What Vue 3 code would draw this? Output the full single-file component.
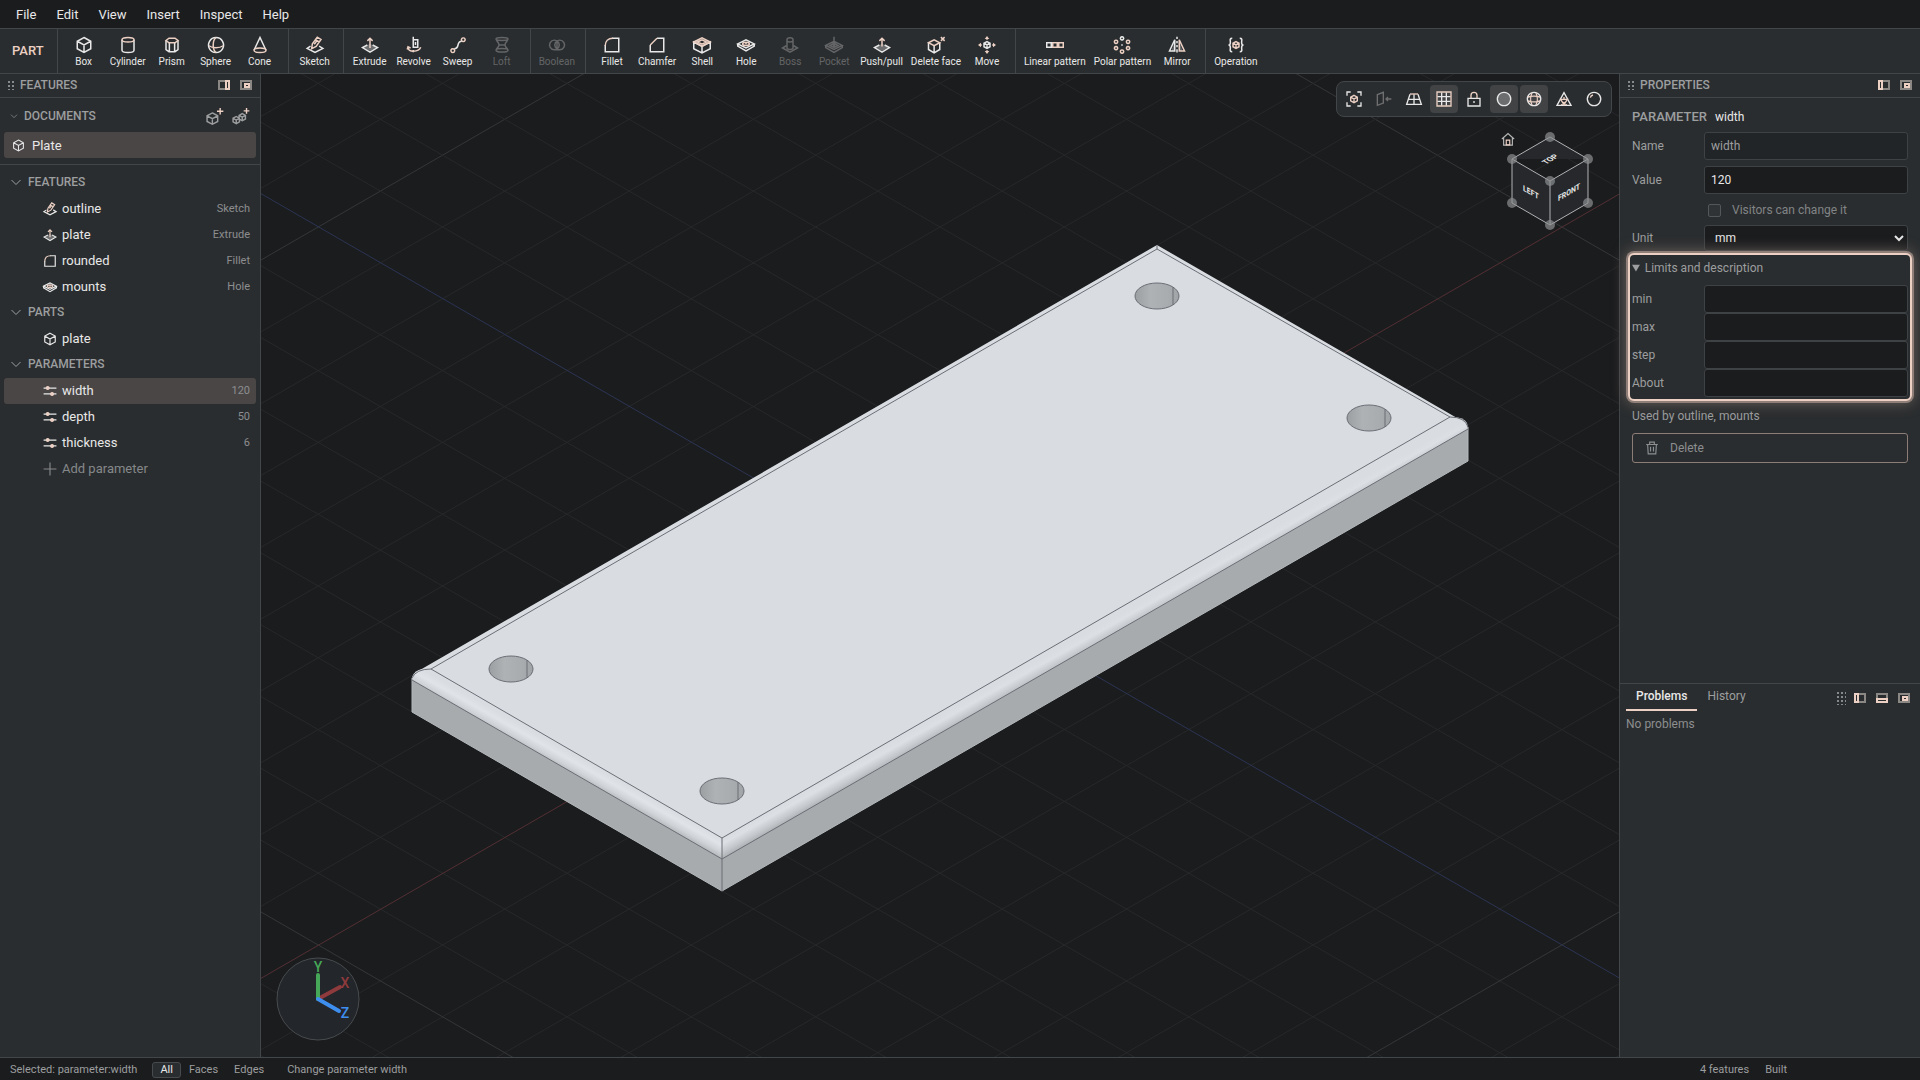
<script setup>
import { h, ref } from 'vue'

const CUBE = 'M12 2l9 5v10l-9 5-9-5V7zM3 7l9 5 9-5M12 12v10'
const LOW_DIAMOND = 'M8.5 12L2 15.5l10 6 10-6L15.5 12'

// Each stroke is [tone, path]: w = ink, a = accent; a trailing f fills the shape.
const glyphs = {
  box: [['w', CUBE]],
  cylinder: [['w', 'M4 5v14c0 1.7 3.5 3 8 3s8-1.3 8-3V5'], ['a', 'M4 5c0-1.7 3.5-3 8-3s8 1.3 8 3-3.5 3-8 3-8-1.3-8-3z']],
  prism: [['w', 'M4 6v12l4 3h8l4-3V6M8.5 9v12M15.5 9v12'], ['a', 'M4 6l4-3h8l4 3-4 3H8z']],
  sphere: [['w', 'M12 2a10 10 0 1 0 .1 0z'], ['a', 'M12 2c-5 4-5 16 0 20M2.5 13c5 3.5 14 3.5 19 0']],
  cone: [['w', 'M4 19l8-17 8 17'], ['a', 'M4 19c0-1.6 3.5-3 8-3s8 1.4 8 3-3.5 3-8 3-8-1.4-8-3z']],
  sketch: [['w', 'M6 13.5l-4.5 3L12 22l10.5-5.5-5-3'], ['a', 'M7.5 17l1-6.5L15 1.5l5 3-6.5 9.5zM12.5 5l5 3M11 11l3-4']],
  extrude: [['dimf', 'M12 10l8 5.5-8 4.5-8-4.5z'], ['w', LOW_DIAMOND], ['a', 'M12 16V3M8.5 6.5L12 3l3.5 3.5']],
  revolve: [['w', 'M11 1v15M11 18.5v3M11 5h6v10h-6M14 8v4'], ['a', 'M4 15c0 7 14 7 17 0M3 18l1-3.5L7.5 16']],
  sweep: [['w', 'M7 17C15 17 9 7 17 7'], ['a', 'M5 17a2.5 2.5 0 1 0 .1 0zM19 2.5a2.5 2.5 0 1 0 .1 0z']],
  loft: [['w', 'M4 4c0-2.5 16-2.5 16 0s-16 2.5-16 0zM4 19c0-3 16-3 16 0s-16 3.5-16 0zM4.5 5c1 3 3.5 4 3.5 7s-3 4-3.5 6M19.5 5c-1 3-3.5 4-3.5 7s3 4 3.5 6M8 12h8']],
  boolean: [['w', 'M8.5 5.5a6.5 6.5 0 1 0 .1 0zM15.5 5.5a6.5 6.5 0 1 0 .1 0zM12 8v8']],
  fillet: [['w', 'M12 3h9v18H3v-9'], ['a', 'M3 13C3 7 7 3 13 3']],
  chamfer: [['w', 'M12 3h9v18H3v-9'], ['a', 'M3 12l9-9']],
  shell: [['w', 'M1 8v9l11 5.5L23 17V8l-11 6zM12 14v8'], ['a', 'M1 8l11-5.5L23 8l-11 5.5zM6 8l6-3 6 3-6 3z']],
  hole: [['w', 'M1 10.5L12 5l11 5.5L12 16zM1 10.5v3L12 20l11-6.5v-3'], ['a', 'M7.5 10.5c0-2.8 9-2.8 9 0s-9 2.8-9 0zM11 10h2']],
  boss: [['w', 'M7 13l-5 3 10 5.5 10-5.5-5-3M8 5c0-3.5 8-3.5 8 0v11c0 2.5-8 2.5-8 0zM8 6c0 2.5 8 2.5 8 0']],
  pocket: [['w', 'M1 12.5L12 7l11 5.5L12 18zM1 12.5v3L12 22l11-6.5v-3M6.5 12.5L12 9.7l5.5 2.8-5.5 2.8zM12 1v12M9 10l3 3 3-3']],
  pushpull: [['dimf', 'M12 10l8 5.5-8 4.5-8-4.5z'], ['w', LOW_DIAMOND], ['a', 'M12 14V3M8.5 6.5L12 3l3.5 3.5']],
  deleteface: [['w', 'M2 9v9l7.5 4.5L17 18V9M9.5 13v9'], ['a', 'M2 9l7.5-4L17 9l-7.5 4zM18.5 1.5l5 5M23.5 1.5l-5 5']],
  move: [['w', 'M12 7.5l4 2.2v4.6l-4 2.2-4-2.2V9.7zM8 9.7l4 2.3 4-2.3M12 12v4.5'], ['af', 'M12 0l3 4H9zM12 24l3-4H9zM0 12l4-3v6zM24 12l-4-3v6z'], ['a', 'M12 3v2M12 19v2M3 12h2M19 12h2']],
  linear: [['w', 'M1 9h6v6H1z'], ['a', 'M9 9h6v6H9zM17 9h6v6h-6z']],
  polar: [['w', 'M12 1a2.2 2.2 0 1 0 .1 0zM12 11v2M11 12h2'], ['a', 'M4 5.5a2.2 2.2 0 1 0 .1 0zM20 5.5a2.2 2.2 0 1 0 .1 0zM4 14a2.2 2.2 0 1 0 .1 0zM20 14a2.2 2.2 0 1 0 .1 0zM12 18.5a2.2 2.2 0 1 0 .1 0z']],
  mirror: [['dimf', 'M9 5v15H5zM15 5v15h4z'], ['w', 'M9 5v15H2zM12 1v3M12 6.5v3M12 12v3M12 17.5v4.5'], ['a', 'M15 5v15h7z']],
  operation: [['w', 'M7 3c-4 0-2.5 3-2.5 5.5S3 12 2 12c1 0 2.5 1 2.5 3.5S3 21 7 21M17 3c4 0 2.5 3 2.5 5.5S21 12 22 12c-1 0-2.5 1-2.5 3.5S21 21 17 21'], ['a', 'M12 7.5l4 2.2v4.6l-4 2.2-4-2.2V9.7zM8 9.7l4 2.3 4-2.3M12 12v4.5']],
  params: [['w', 'M1 7h22M1 17h22'], ['af', 'M8 3.5a3.5 3.5 0 1 0 .1 0zM15.5 13.5a3.5 3.5 0 1 0 .1 0z']],
  plus: [['w', 'M12 1v22M1 12h22']],
  chevron: [['w', 'M3 8l9 9 9-9']],
  adddoc: [['w', 'M9 7l7.5 4v8L9 23l-7.5-4v-8zM1.5 11L9 15l7.5-4M9 15v8'], ['a', 'M20 0v9M15.5 4.5h9']],
  addasm: [['w', 'M6 12l4.5 2.5v5L6 22l-4.5-2.5v-5zM1.5 14.5L6 17l4.5-2.5M6 17v5M14.5 8l4.5 2.5v5L14.5 18 10 15.5v-5zM10 10.5l4.5 2.5 4.5-2.5M14.5 13v5'], ['a', 'M20.5 0v8M16.5 4h8']],
  fit: [['w', 'M1.5 7V1.5H7M17 1.5h5.5V7M22.5 17v5.5H17M7 22.5H1.5V17'], ['a', 'M12 6.5l5 2.7v5.6l-5 2.7-5-2.7V9.2zM7 9.2l5 2.8 5-2.8M12 12v5.5']],
  section: [['w', 'M2 5.5L11 2v16l-9 3.5zM15 12h8M18 9l-3 3 3 3']],
  persp: [['w', 'M6 5L1 20h22L18 5M4 12.5h16M12 5v15'], ['a', 'M6 4.5h12']],
  grid: [['w', 'M8.5 2v20M15.5 2v20M2 8.5h20M2 15.5h20'], ['a', 'M1.5 1.5h21v21h-21z']],
  lock: [['w', 'M3 11h18v11.5H3zM12 15v3'], ['a', 'M7.5 11V6.5c0-6 9-6 9 0V11']],
  shaded: [['dimf', 'M12 3a9 9 0 1 0 .1 0z'], ['w', 'M12 2a10 10 0 1 0 .1 0z']],
  wires: [['w', 'M12 2a10 10 0 1 0 .1 0z'], ['a', 'M9 3c-2.5 5-2.5 13 0 18M15 3c2.5 5 2.5 13 0 18M3 9c5-1.5 13-1.5 18 0M3 15c5 1.5 13 1.5 18 0']],
  mesh: [['w', 'M12 2.5L1.5 21.5h21z'], ['a', 'M7 12.5h10l-5 8zM12 12v-3M8 21l4-4 4 4']],
  matte: [['w', 'M12 2a10 10 0 1 0 .1 0z'], ['a', 'M6.5 10c.5-2 2-3.5 4-4']],
  home: [['w', 'M1.5 12L12 2.5 22.5 12M4.5 10v12.5h15V10'], ['a', 'M9 22v-8h6v8z']],
  trash: [['w', 'M2 6h20M8 6V2h8v4M4.5 6l1 16h13l1-16M9.5 10v8M14.5 10v8']],
}

const Glyph = (props) =>
  h('svg', { class: 'glyph', viewBox: '0 0 24 24', 'aria-hidden': 'true' },
    glyphs[props.name].map(([tone, d]) => h('path', { class: 'tone-' + tone, d })))
Glyph.props = ['name']

const dockShapes = {
  right: [['m', 'M8 1H1v8h7'], ['a', 'M8 1h3v8H8z']],
  left: [['m', 'M4 1h7v8H4'], ['a', 'M1 1h3v8H1z']],
  bottom: [['m', 'M1 6V1h10v5'], ['a', 'M1 6h10v3H1z']],
  float: [['m', 'M1 1h10v8H1z'], ['a', 'M5 4h4v3H5z']],
}
const Dock = (props) =>
  h('svg', { class: 'dock', viewBox: '0 0 12 10', 'aria-hidden': 'true' },
    dockShapes[props.side].map(([tone, d]) => h('path', { class: 'tone-' + tone, d })))
Dock.props = ['side']

const menus = ['File', 'Edit', 'View', 'Insert', 'Inspect', 'Help']
const toolGroups = [
  [['box', 'Box'], ['cylinder', 'Cylinder'], ['prism', 'Prism'], ['sphere', 'Sphere'], ['cone', 'Cone']],
  [['sketch', 'Sketch']],
  [['extrude', 'Extrude'], ['revolve', 'Revolve'], ['sweep', 'Sweep'], ['loft', 'Loft', true]],
  [['boolean', 'Boolean', true]],
  [['fillet', 'Fillet'], ['chamfer', 'Chamfer'], ['shell', 'Shell'], ['hole', 'Hole'], ['boss', 'Boss', true], ['pocket', 'Pocket', true], ['pushpull', 'Push/pull'], ['deleteface', 'Delete face'], ['move', 'Move']],
  [['linear', 'Linear pattern'], ['polar', 'Polar pattern'], ['mirror', 'Mirror']],
  [['operation', 'Operation']],
]
const tree = [
  { title: 'Features', rows: [['sketch', 'outline', 'Sketch'], ['extrude', 'plate', 'Extrude'], ['fillet', 'rounded', 'Fillet'], ['hole', 'mounts', 'Hole']] },
  { title: 'Parts', rows: [['box', 'plate', '']] },
  { title: 'Parameters', rows: [['params', 'width', '120'], ['params', 'depth', '50'], ['params', 'thickness', '6']] },
]
const selected = ref('width')
const viewTools = [
  ['fit', 'Fit view'], ['section', 'Section'], ['persp', 'Perspective'], ['grid', 'Grid', true], ['lock', 'Lock'],
  ['shaded', 'Shaded', true], ['wires', 'Edges', true], ['mesh', 'Mesh'], ['matte', 'Material'],
]
const limits = ref({ min: '', max: '', step: '', About: '' })
const value = ref('120')
const unit = ref('mm')
const filters = ['All', 'Faces', 'Edges']
const filter = ref('All')

// Isometric ground grid around the world origin.
const origin = { x: 940, y: 586 }
const cell = 71.8
const slope = 0.57735
const lines = []
for (let i = -22; i <= 22; i++) {
  if (i === 0) continue
  for (const dir of [-1, 1]) {
    const at = (x) => origin.y + i * cell + dir * slope * (x - origin.x)
    lines.push({ key: `${i}:${dir}`, major: i % 10 === 0, y1: at(-400), y2: at(2300) })
  }
}
const holes = [[511, 669], [722, 791], [1157, 296], [1369, 418]]
const corners = [[44, 6], [6, 28], [82, 28], [44, 50], [6, 72], [82, 72], [44, 94]]
</script>

<template>
  <div class="app">
    <nav class="menubar">
      <button v-for="m in menus" :key="m" type="button">{{ m }}</button>
    </nav>

    <div class="toolbar">
      <div class="mode">PART</div>
      <div v-for="(group, gi) in toolGroups" :key="gi" class="group">
        <button v-for="[icon, label, off] in group" :key="icon" type="button" class="tool" :disabled="off">
          <Glyph :name="icon" /><span>{{ label }}</span>
        </button>
      </div>
    </div>

    <main class="work">
      <aside class="side left">
        <header class="panel-head">
          <span class="grip"></span>
          <h2>FEATURES</h2>
          <button type="button" aria-label="Dock right"><Dock side="right" /></button>
          <button type="button" aria-label="Float"><Dock side="float" /></button>
        </header>
        <section class="documents">
          <div class="doc-head">
            <Glyph name="chevron" />
            <h3>DOCUMENTS</h3>
            <button type="button" aria-label="New part"><Glyph name="adddoc" /></button>
            <button type="button" aria-label="New assembly"><Glyph name="addasm" /></button>
          </div>
          <button type="button" class="doc"><Glyph name="box" />Plate</button>
        </section>
        <section class="tree">
          <template v-for="part in tree" :key="part.title">
            <h3><Glyph name="chevron" />{{ part.title.toUpperCase() }}</h3>
            <button
              v-for="[icon, name, note] in part.rows" :key="name" type="button" class="row"
              :class="{ on: name === selected }" @click="selected = name"
            >
              <Glyph :name="icon" /><span>{{ name }}</span><small>{{ note }}</small>
            </button>
          </template>
          <button type="button" class="row add"><Glyph name="plus" /><span>Add parameter</span></button>
        </section>
      </aside>

      <section class="viewport">
        <svg class="scene" viewBox="261 74 1358 983" preserveAspectRatio="xMidYMid slice">
          <defs>
            <linearGradient id="roundLeft" gradientUnits="userSpaceOnUse" x1="722" y1="838" x2="713" y2="854">
              <stop offset="0" stop-color="#d9dde2" /><stop offset="0.35" stop-color="#e0e3e8" />
              <stop offset="0.7" stop-color="#cfd2d6" /><stop offset="1" stop-color="#b4b8bb" />
            </linearGradient>
            <linearGradient id="roundRight" gradientUnits="userSpaceOnUse" x1="722" y1="838" x2="731" y2="854">
              <stop offset="0" stop-color="#d9dde2" /><stop offset="0.3" stop-color="#dcdfe4" />
              <stop offset="0.7" stop-color="#c4c7cb" /><stop offset="1" stop-color="#acb0b3" />
            </linearGradient>
            <linearGradient id="bore">
              <stop offset="0" stop-color="#9b9fa1" /><stop offset="0.35" stop-color="#aeb2b5" />
              <stop offset="0.75" stop-color="#a8acaf" /><stop offset="1" stop-color="#a0a4a7" />
            </linearGradient>
          </defs>
          <line v-for="l in lines" :key="l.key" x1="-400" :y1="l.y1" x2="2300" :y2="l.y2" :class="l.major ? 'major' : 'minor'" />
          <line class="axis-x" x1="-400" y1="1360" x2="2300" y2="-199" />
          <line class="axis-z" x1="-400" y1="-188" x2="2300" y2="1371" />
          <path fill="#a7abae" d="M412 679L722 858l746-430v33L722 891 412 712z" />
          <path fill="#d9dde2" d="M1157 245L420 670l11 1 291 168 729-420 6-1z" />
          <path fill="url(#roundLeft)" d="M431 669l291 169v21L412 680v-3q3-7 10-8z" />
          <path fill="url(#roundRight)" d="M722 838l728-421q13-1 17 6l1 6-746 430z" />
          <g class="edges">
            <path class="rim" d="M412 678v34l310 179 746-430v-34" />
            <path d="M412 680l310 179 746-430M722 838v53M431 669l291 169 728-421M431 669l726-420 293 168M1157 245v4" />
            <path d="M412 678q4-9 19-9M1450 417q15 0 18 10" />
          </g>
          <g v-for="[x, y] in holes" :key="x" class="bore">
            <ellipse :cx="x" :cy="y" rx="22" ry="13" />
            <path :d="`M${x + 16} ${y - 9}v18`" />
          </g>
        </svg>

        <div class="view-tools">
          <button v-for="[icon, label, on] in viewTools" :key="icon" type="button" :aria-label="label" :class="{ on, off: icon === 'section' }">
            <Glyph :name="icon" />
          </button>
        </div>

        <button type="button" class="home" aria-label="Home view"><Glyph name="home" /></button>
        <svg class="cube" viewBox="0 0 88 100">
          <path class="faces" d="M44 6l38 22v44L44 94 6 72V28zM6 28l38 22 38-22M44 50v44" />
          <circle v-for="[x, y] in corners" :key="x + '-' + y" :cx="x" :cy="y" r="5" />
          <text transform="matrix(.866 -.5 .866 .5 44 28)" y="3">TOP</text>
          <text transform="matrix(.866 .5 0 1 25 61)" y="3">LEFT</text>
          <text transform="matrix(.866 -.5 0 1 63 61)" y="3">FRONT</text>
        </svg>

        <svg class="gizmo" viewBox="0 0 84 84">
          <circle cx="42" cy="42" r="41" />
          <g class="gx"><path d="M42 42l22-12" /><text x="69" y="31">X</text></g>
          <g class="gy"><path d="M42 42V18" /><text x="42" y="15">Y</text></g>
          <g class="gz"><path d="M42 42l21 12" /><text x="69" y="61">Z</text></g>
        </svg>
      </section>

      <aside class="side right">
        <header class="panel-head">
          <span class="grip"></span>
          <h2>PROPERTIES</h2>
          <button type="button" aria-label="Dock left"><Dock side="left" /></button>
          <button type="button" aria-label="Float"><Dock side="float" /></button>
        </header>
        <form class="props" @submit.prevent>
          <p class="subject"><b>PARAMETER</b> width</p>
          <div class="field"><label for="p-name">Name</label><input id="p-name" type="text" value="width" disabled /></div>
          <div class="field"><label for="p-value">Value</label><input id="p-value" v-model="value" type="text" /></div>
          <label class="check"><input type="checkbox" disabled />Visitors can change it</label>
          <div class="field unit">
            <label for="p-unit">Unit</label>
            <select id="p-unit" v-model="unit"><option>mm</option><option>cm</option><option>in</option></select>
          </div>
          <details open class="limits">
            <summary>Limits and description</summary>
            <div v-for="(_, key) in limits" :key="key" class="field">
              <label :for="'p-' + key">{{ key }}</label><input :id="'p-' + key" v-model="limits[key]" type="text" />
            </div>
          </details>
          <p class="used">Used by outline, mounts</p>
          <button type="button" class="delete"><Glyph name="trash" />Delete</button>
        </form>
        <section class="problems">
          <div class="tabs">
            <button type="button" class="tab on">Problems</button>
            <button type="button" class="tab">History</button>
            <span class="grip wide"></span>
            <button type="button" aria-label="Dock left"><Dock side="left" /></button>
            <button type="button" aria-label="Dock bottom"><Dock side="bottom" /></button>
            <button type="button" aria-label="Float"><Dock side="float" /></button>
          </div>
          <p>No problems</p>
        </section>
      </aside>
    </main>

    <footer class="status">
      <span>Selected: parameter:width</span>
      <div class="filters">
        <button v-for="f in filters" :key="f" type="button" :class="{ on: f === filter }" @click="filter = f">{{ f }}</button>
      </div>
      <span class="last">Change parameter width</span>
      <span>4 features</span>
      <span class="built">Built</span>
    </footer>
  </div>
</template>

<style>
body { background: #1b1c1e; }
.glyph { display: block; flex: none; width: 18px; height: 18px; overflow: visible; }
.glyph path { fill: none; stroke: currentColor; stroke-width: 2; }
.glyph .tone-a { stroke: var(--tint, #ecd0c4); }
.glyph .tone-af { fill: var(--tint, #ecd0c4); stroke: none; }
.glyph .tone-dimf { fill: #6b6d6f; stroke: none; }
.dock { display: block; width: 12px; height: 10px; }
.dock path { fill: none; stroke-width: 2; stroke: #8a8785; }
.dock .tone-a { stroke: #ecd0c4; }
</style>

<style scoped>
.app {
  --panel: #2a2d2f;
  --line: #434648;
  --accent: #ecd0c4;
  --text: #e8e8e8;
  --muted: #9c9e9f;
  --faint: #8c8e8f;
  display: grid;
  grid-template-rows: 28px auto minmax(0, 1fr) 23px;
  height: 100vh;
  overflow: hidden;
  background: #1b1c1e;
  color: var(--text);
  font: 12px/16px Roboto, "Liberation Sans", sans-serif;
  color-scheme: dark;
}
button { margin: 0; padding: 0; border: 0; background: none; color: inherit; font: inherit; }
h2, h3, p { margin: 0; font-weight: 500; }
h2, h3 { color: var(--muted); font-size: 12px; line-height: 16px; }

.menubar { display: flex; padding: 2px 6px 0; }
.menubar button { padding: 0 10px; font-size: 13px; }

.toolbar { display: flex; height: 44px; border-top: 1px solid var(--line); border-bottom: 1px solid var(--line); background: var(--panel); }
.mode { display: flex; align-items: center; padding: 0 13px 0 12px; color: var(--accent); font-size: 13px; font-weight: 500; }
.group { display: flex; padding: 0 6px 0 4px; border-left: 1px solid var(--line); }
.tool { display: flex; flex-direction: column; align-items: center; gap: 1px; min-width: 44px; padding: 7px 4px 0; font-size: 10px; line-height: 14px; }
.tool span { white-space: nowrap; }
.tool:disabled { --tint: #66605f; color: #636567; }

.work { display: grid; grid-template-columns: 261px minmax(0, 1fr) 301px; min-height: 0; }
.side { display: flex; flex-direction: column; min-height: 0; background: var(--panel); }
.left { border-right: 1px solid var(--line); }
.right { border-left: 1px solid var(--line); }
.panel-head { display: flex; align-items: center; gap: 10px; height: 21px; padding: 0 8px 2px 7px; border-bottom: 1px solid var(--line); }
.panel-head h2 { flex: 1; margin-left: -4px; }
.grip { width: 7px; height: 10px; background: radial-gradient(circle, #87898a 1px, transparent 1px) 0 0 / 4px 4px; }
.grip.wide { width: 10px; height: 14px; }

.documents { padding: 4px 4px 6px; border-bottom: 1px solid var(--line); }
.doc-head { display: flex; align-items: center; gap: 9px; height: 28px; padding: 0 7px 2px 6px; color: var(--muted); }
.doc-head h3 { flex: 1; margin-left: -3px; }
.doc-head > .glyph { width: 8px; height: 8px; }
.doc-head button .glyph { width: 17px; height: 17px; }
.doc { display: flex; align-items: center; gap: 7px; width: 100%; height: 26px; padding: 1px 8px 0; border-radius: 3px; background: #4a4646; font-size: 13px; }
.doc .glyph { width: 13px; height: 13px; }

.tree { padding: 5px 4px; }
.tree h3 { display: flex; align-items: center; gap: 6px; height: 24px; padding: 0 0 2px 6px; }
.tree h3 .glyph { width: 12px; height: 12px; }
.row { display: flex; align-items: center; gap: 5px; width: 100%; height: 26px; padding: 0 6px 0 39px; border-radius: 3px; font-size: 13px; text-align: left; }
.row .glyph { width: 14px; height: 14px; }
.row span { flex: 1; }
.row small { color: var(--faint); font-size: 11px; }
.row.on { background: #4a4646; }
.row.add { color: #85888a; }

.viewport { position: relative; overflow: hidden; background: #1b1c1e; }
.scene { display: block; width: 100%; height: 100%; }
.scene line { stroke-width: 1; }
.minor { stroke: #26282a; }
.major { stroke: #343739; }
.axis-x { stroke: #532f33; }
.axis-z { stroke: #2b3454; }
.edges path { fill: none; stroke: #6b6e75; stroke-width: 1; }
.edges .rim { stroke: #b4b8bb; }
.bore ellipse { fill: url(#bore); stroke: #6b6e75; }
.bore path { stroke: #6b6e75; }

.view-tools { position: absolute; top: 7px; right: 7px; display: flex; gap: 2px; padding: 3px; border: 1px solid var(--line); border-radius: 8px; background: var(--panel); }
.view-tools button { display: grid; place-items: center; width: 28px; height: 28px; border-radius: 4px; }
.view-tools .glyph { width: 16px; height: 16px; }
.view-tools .on { background: #414345; }
.view-tools .off { color: #6d6f71; }
.home { position: absolute; top: 58px; right: 104px; color: #b5b5b5; }
.home .glyph { width: 14px; height: 14px; }
.cube { position: absolute; top: 57px; right: 25px; width: 88px; height: 100px; }
.cube .faces { fill: #26282c; stroke: #b0b2b4; stroke-width: 1; }
.cube circle { fill: #8c8e90; fill-opacity: 0.7; }
.cube text { fill: #e8e8e8; font-size: 8px; font-weight: 700; text-anchor: middle; }
.gizmo { position: absolute; left: 15px; bottom: 16px; width: 84px; height: 84px; }
.gizmo circle { fill: #23262a; stroke: #484b4d; stroke-width: 1; }
.gizmo path { fill: none; stroke-width: 4; stroke-linecap: round; }
.gizmo text { font-size: 14px; font-weight: 500; text-anchor: middle; }
.gx path { stroke: #8f3a3d; }
.gx text { fill: #8f3a3d; }
.gy path { stroke: #46a758; }
.gy text { fill: #46a758; }
.gz path { stroke: #3e8ef0; }
.gz text { fill: #3e8ef0; }

.props { flex: 1; min-height: 0; padding: 10px 12px 0; color: var(--muted); }
.subject { height: 18px; line-height: 18px; margin-bottom: 6px; color: var(--text); font-weight: 400; }
.subject b { margin-right: 5px; color: var(--muted); font-size: 13px; font-weight: 500; }
.field { display: flex; align-items: center; margin-bottom: 6px; }
.field label { flex: 0 0 72px; }
.field input, .field select { flex: 1; box-sizing: border-box; min-width: 0; height: 28px; margin: 0; padding: 0 6px; border: 1px solid #3f4244; border-radius: 3px; background: #1b1c1e; color: var(--text); font: inherit; }
.field input:disabled { background: #222527; color: var(--muted); }
.check { display: flex; align-items: center; height: 20px; margin-bottom: 5px; padding-left: 76px; color: #818486; }
.check input { appearance: none; box-sizing: border-box; width: 13px; height: 13px; margin: 0 11px 0 0; border: 1px solid #54575a; border-radius: 2px; background: #303335; }
.unit { margin-bottom: 2px; }
.unit select { height: 26px; }
.limits { position: relative; margin: 0 -4px; padding: 0 2px 2px; border: 2px solid var(--accent); border-radius: 6px; background: var(--panel); box-shadow: 0 0 0 2px #8f7f78, 0 0 14px 2px #6a605c; }
.limits summary { height: 30px; line-height: 26px; }
.limits .field { margin-bottom: 0; }
.used { margin: 7px 0 9px; font-weight: 400; }
.delete { display: flex; align-items: center; gap: 11px; width: 100%; height: 30px; padding: 0 12px; border: 1px solid #8c7d77; border-radius: 3px; color: var(--faint); }
.delete .glyph { width: 14px; height: 14px; }

.problems { height: 373px; border-top: 1px solid var(--line); padding: 0 10px 0 6px; }
.tabs { display: flex; align-items: center; gap: 10px; height: 27px; color: var(--muted); }
.tab { height: 27px; padding: 0 10px; line-height: 25px; border-bottom: 2px solid transparent; box-sizing: border-box; }
.tab + .tab { margin-left: -10px; }
.tab.on { border-color: var(--accent); color: var(--text); font-weight: 500; }
.tabs .grip { margin: 0 -2px 0 auto; }
.problems p { margin-top: 5px; color: var(--faint); font-weight: 400; }

.status { display: flex; align-items: center; padding: 1px 10px 0; border-top: 1px solid var(--line); background: #1b1c1e; color: var(--muted); font-size: 11px; }
.filters { display: flex; margin-left: 15px; }
.filters button { height: 16px; padding: 0 7px; border: 1px solid transparent; border-radius: 3px; line-height: 14px; }
.filters .on { border-color: #484b4d; background: #2a2d2f; color: var(--text); }
.last { flex: 1; margin-left: 15px; }
.built { margin: 0 123px 0 16px; }
</style>
